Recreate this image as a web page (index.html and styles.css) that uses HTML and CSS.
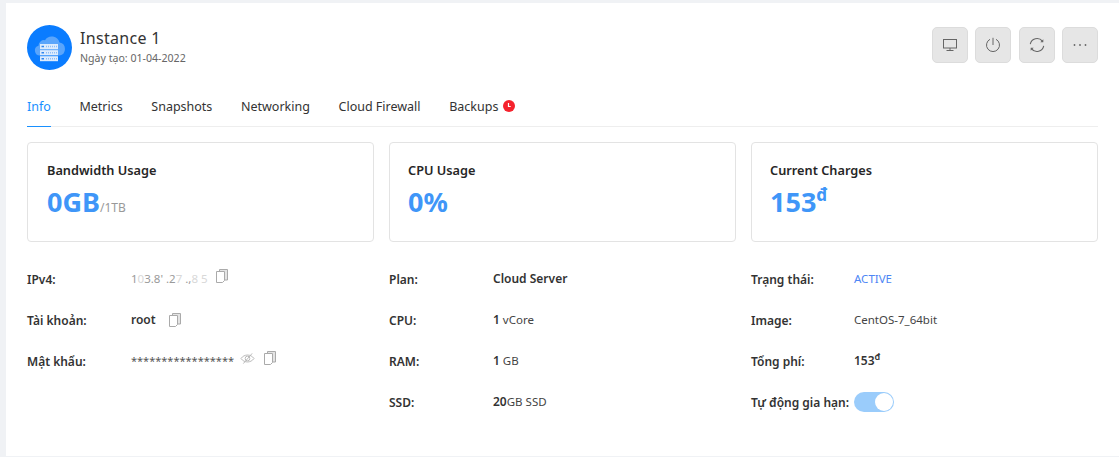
FILE: index.html
```html
<!DOCTYPE html>
<html lang="vi">
<head>
<meta charset="utf-8">
<title>Instance 1</title>
<link rel="stylesheet" href="styles.css">
</head>
<body>
<main class="panel">
  <header class="head">
    <div class="identity">
      <svg class="avatar" viewBox="0 0 45 45" width="45" height="45">
        <circle cx="22.500" cy="22.500" r="22.500" fill="#0a7cff"/>
        <path d="M13 30.500a5 5 0 0 1-1.500-9.800 5.500 5.500 0 0 1 6.500-5.500 8 8 0 0 1 14.500 2.300 6.600 6.600 0 0 1 0 13z" fill="#5aa5fb"/>
        <rect x="13" y="19" width="18" height="5.200" fill="#dcebfd"/>
        <rect x="13" y="25.200" width="18" height="5" fill="#dcebfd"/>
        <rect x="13" y="31.200" width="18" height="5" fill="#dcebfd"/>
        <path d="M14.500 21.600h2.500M14.500 27.700h2.500M14.500 33.700h2.500" stroke="#2f86ee" stroke-width="1.500"/>
        <path d="M19 21.600h11M19 27.700h11M19 33.700h11" stroke="#8dbdf6" stroke-width="1.500" stroke-dasharray="1 1"/>
      </svg>
      <div>
        <h1 class="name">Instance 1</h1>
        <p class="created">Ngày tạo: 01-04-2022</p>
      </div>
    </div>
    <div class="actions">
      <button class="act" aria-label="Console">
        <svg viewBox="0 0 16 16" width="16" height="16" fill="none" stroke="#666" stroke-width="1"><rect x="1.500" y="2.500" width="13" height="8.500" /><path d="M8 11v2.500M4.500 13.500h7" /></svg>
      </button>
      <button class="act" aria-label="Power">
        <svg viewBox="0 0 16 16" width="16" height="16" fill="none" stroke="#666" stroke-width="1"><path d="M5 2.300a6.500 6.500 0 1 0 6 0"/><path d="M8 .8v7.200"/></svg>
      </button>
      <button class="act" aria-label="Reload">
        <svg viewBox="0 0 16 16" width="16" height="16" fill="none" stroke="#666" stroke-width="1.100"><path d="M1.300 7.200A6.800 6.800 0 0 1 13.400 4.200"/><path d="M14.700 8.800A6.800 6.800 0 0 1 2.600 11.800"/><path d="M14.300 2.300v3h-3z" fill="#666" stroke="none"/><path d="M1.700 13.700v-3h3z" fill="#666" stroke="none"/></svg>
      </button>
      <button class="act" aria-label="More">
        <svg viewBox="0 0 16 16" width="16" height="16" fill="#666"><circle cx="2.500" cy="8" r=".9"/><circle cx="8" cy="8" r=".9"/><circle cx="13.500" cy="8" r=".9"/></svg>
      </button>
    </div>
  </header>

  <nav class="tabs">
    <a class="tab tab-active">Info</a>
    <a class="tab">Metrics</a>
    <a class="tab">Snapshots</a>
    <a class="tab">Networking</a>
    <a class="tab">Cloud Firewall</a>
    <a class="tab">Backups
      <svg class="clock" viewBox="0 0 12 12" width="12" height="12"><circle cx="6" cy="6" r="6" fill="#f5222d"/><path d="M5.500 3v3.500h2.200" fill="none" stroke="#fff" stroke-width="1.200"/></svg>
    </a>
  </nav>

  <section class="stats">
    <div class="stat stat-first">
      <div class="stat-title">Bandwidth Usage</div>
      <div class="stat-value">0GB<span class="stat-unit">/1TB</span></div>
    </div>
    <div class="stat">
      <div class="stat-title">CPU Usage</div>
      <div class="stat-value">0%</div>
    </div>
    <div class="stat">
      <div class="stat-title">Current Charges</div>
      <div class="stat-value">153<sup class="stat-sup">đ</sup></div>
    </div>
  </section>

  <section class="details">
    <dl class="col">
      <div class="row"><dt>IPv4:</dt><dd><span class="ip">1<i>0</i>3.8' .2<i>7</i> .,<i>8</i> <i>5</i></span><svg class="copy copy-ip" viewBox="0 0 12 14" width="12" height="14"><use href="#copy"/></svg></dd></div>
      <div class="row"><dt>Tài khoản:</dt><dd><b>root</b><svg class="copy copy-root" viewBox="0 0 12 14" width="12" height="14"><use href="#copy"/></svg></dd></div>
      <div class="row"><dt>Mật khẩu:</dt><dd><span class="mask">*****************</span>
        <svg class="eye" viewBox="0 0 16 14" width="15" height="13" fill="none" stroke="#b5b5b5" stroke-width="1"><path d="M1 7c3.500-5 10.500-5 14 0-3.500 5-10.500 5-14 0z"/><circle cx="8" cy="7" r="2.500"/><path d="M3.500 12.500L13 1.500"/></svg>
        <svg class="copy copy-pass" viewBox="0 0 12 14" width="12" height="14"><use href="#copy"/></svg></dd></div>
    </dl>
    <dl class="col">
      <div class="row"><dt>Plan:</dt><dd><b>Cloud Server</b></dd></div>
      <div class="row"><dt>CPU:</dt><dd><b>1</b> vCore</dd></div>
      <div class="row"><dt>RAM:</dt><dd><b>1</b> GB</dd></div>
      <div class="row"><dt>SSD:</dt><dd><b>20</b>GB SSD</dd></div>
    </dl>
    <dl class="col col-last">
      <div class="row"><dt>Trạng thái:</dt><dd class="active">ACTIVE</dd></div>
      <div class="row"><dt>Image:</dt><dd>CentOS-7_64bit</dd></div>
      <div class="row"><dt>Tổng phí:</dt><dd><b>153<sup class="fee-sup">đ</sup></b></dd></div>
      <div class="row"><dt>Tự động gia hạn:</dt><dd><span class="switch"><span class="knob"></span></span></dd></div>
    </dl>
  </section>
</main>
<svg class="defs" width="0" height="0"><defs><g id="copy" fill="none" stroke="#aaa" stroke-width="1"><path d="M3.500 .500h8v10.500h-8z" fill="#e4e4e4"/><path d="M.500 2.500h8v9l-2 2h-6z" fill="#fff"/></g></defs></svg>
</body>
</html>
```

FILE: styles.css
```css
* { box-sizing: border-box; }
html, body { margin: 0; height: 100%; }
body {
  background: #f0f2f5;
  font-family: "Noto Sans", "Open Sans", sans-serif;
  color: #262626;
  padding: 3px 0 1px 6px;
  overflow: hidden;
}
.panel {
  background: #fff;
  height: 453px;
  padding: 22px 21px 0 21px;
}
.head { display: flex; justify-content: space-between; align-items: flex-start; height: 62px; }
.identity { display: flex; align-items: flex-start; gap: 8px; }
.avatar { display: block; }
.name { margin: 0; padding-top: 3px; font-size: 16px; font-weight: 400; line-height: 20px; color: #333; letter-spacing: .3px; }
.created { margin: 3px 0 0; font-size: 10.600px; line-height: 15px; color: #666; }
.actions { display: flex; gap: 7.340px; margin-top: 2px; }
.act {
  width: 36px; height: 36px; padding: 0;
  display: flex; align-items: center; justify-content: center;
  background: #e6e6e6; border: 1px solid #dcdcdc; border-radius: 5px;
}
.tabs { display: flex; gap: 28.600px; height: 40px; border-bottom: 1px solid #eee; margin-bottom: 15px; }
.tab { display: flex; align-items: flex-start; gap: 5px; height: 40px; padding-top: 11px; font-size: 12.500px; line-height: 18px; color: #333; }
.tab-active { color: #1890ff; border-bottom: 1px solid #1890ff; }
.clock { margin-top: 2px; }
.stats { display: grid; grid-template-columns: repeat(3, 347px); gap: 15px; }
.stat { height: 100px; border: 1px solid #e3e3e3; border-radius: 4px; padding: 17px 18px 0; }
.stat-first { padding-left: 19px; }
.stat-title { font-size: 12.750px; line-height: 20px; font-weight: 600; color: #262626; }
.stat-value { font-size: 27px; line-height: 38px; font-weight: 700; color: #3f96f8; margin-top: 3px; white-space: nowrap; }
.stat-unit { font-size: 12px; font-weight: 400; color: #999; }
.stat-sup { font-size: 17px; line-height: 0; vertical-align: 11px; }
.details { display: grid; grid-template-columns: repeat(3, 347px); gap: 15px; margin-top: 16px; }
.col { margin: 0; }
.row { display: flex; align-items: center; height: 41px; font-size: 11.500px; }
.row dt { width: 104px; padding-top: 1px; font-size: 12px; font-weight: 600; color: #333; white-space: nowrap; }
.col-last .row dt { width: 103px; }
.row dd { margin: 0; display: flex; align-items: center; color: #444; white-space: pre; }
.row b { font-size: 12px; font-weight: 600; color: #333; }
.row dd b + svg { margin-left: 13px; }
.ip { color: #9a9a9a; }
.ip i { font-style: normal; color: #d8d8d8; }
.copy-ip { margin: -6px 0 0 8px; }
.copy-pass { margin: -5px 0 0 9px; }
.mask { color: #555; font-size: 11px; }
.eye { margin: -4px 0 0 6px; }
.active { color: #4d86f5 !important; }
.fee-sup { font-size: 9px; line-height: 0; vertical-align: 5px; }
.switch {
  width: 40px; height: 20px; border-radius: 10px; background: #9accfb;
  display: flex; justify-content: flex-end; align-items: center; padding-right: 1px;
}
.knob { width: 18px; height: 18px; border-radius: 50%; background: #fff; }
.defs { position: absolute; }
```
